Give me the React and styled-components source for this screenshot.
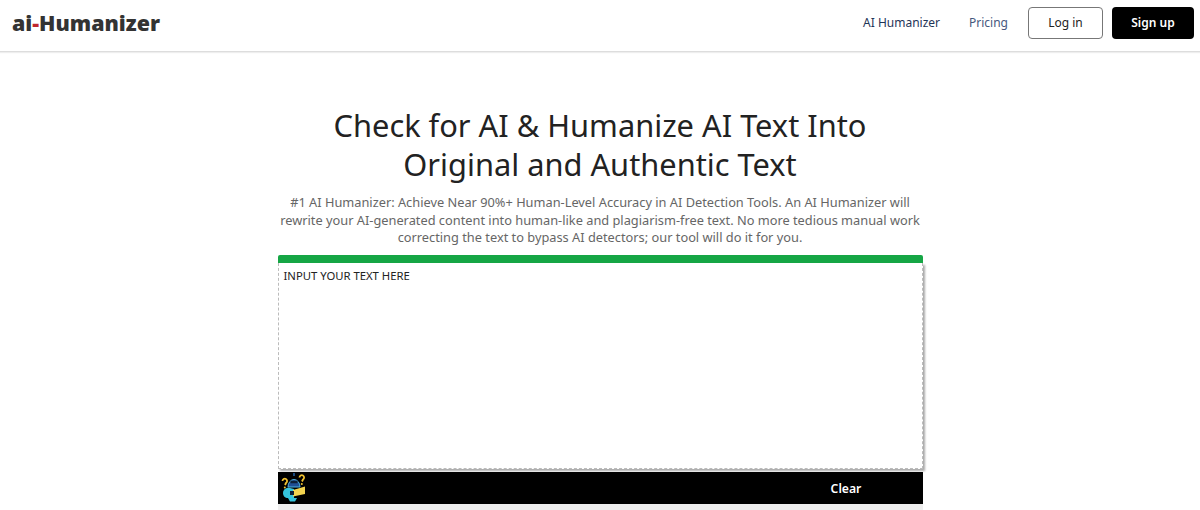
import styled, { createGlobalStyle } from "styled-components";

const GlobalStyle = createGlobalStyle`
    html, body {
        margin: 0;
        padding: 0;
        background: #FFFFFF;
        overflow: hidden;
    }
    * {
        box-sizing: border-box;
    }
    body {
        font-family: "Noto Sans", "Open Sans", sans-serif;
    }
`;

function BotIcon() {
    return (
        <svg width="28" height="30" viewBox="0 0 28 30">
            <path d="M16 0v3" stroke="#2B7BD0" strokeWidth="1.2" />
            <path d="M10 14a6 7.500 0 0 1 12 0z" fill="#1F4F96" stroke="#4FB4E0" strokeWidth="1" />
            <path d="M12.500 9h7" stroke="#0E2038" strokeWidth="2.500" />
            <path d="M5 20c0-3 3-6 7-5l4 1v9H10c-3 0-5-2-5-5z" fill="#35C4DD" />
            <path d="M15 17l12-3.500V21l-12 2.500z" fill="#F2D34F" />
            <rect x="12" y="18" width="4" height="4" fill="#0E2038" />
            <path d="M10 25h9l-2 3.500h-5z" fill="#35C4DD" />
            <path d="M4.500 8a2.300 2.300 0 1 1 3.500 2L7 12" stroke="#F2C230" strokeWidth="1.800" fill="none" />
            <circle cx="6.800" cy="14.500" r="1" fill="#F2C230" />
            <path d="M21.500 4.500a2.300 2.300 0 1 1 3.500 2L24 8.500" stroke="#F2C230" strokeWidth="1.800" fill="none" />
            <circle cx="23.800" cy="11" r="1" fill="#F2C230" />
        </svg>
    );
}

export default function App() {
    return (
        <>
            <GlobalStyle />
            <Header>
                <Logo>ai<LogoDash>-</LogoDash>Humanizer</Logo>
                <Nav>
                    <NavLink href="#">AI Humanizer</NavLink>
                    <NavLink href="#" $muted>Pricing</NavLink>
                    <LoginButton>Log in</LoginButton>
                    <SignupButton>Sign up</SignupButton>
                </Nav>
            </Header>
            <Main>
                <Title>Check for AI &amp; Humanize AI Text Into<br />Original and Authentic Text</Title>
                <Intro>
                    #1 AI Humanizer: Achieve Near 90%+ Human-Level Accuracy in AI Detection Tools. An AI Humanizer will<br />
                    rewrite your AI-generated content into human-like and plagiarism-free text. No more tedious manual work<br />
                    correcting the text to bypass AI detectors; our tool will do it for you.
                </Intro>
                <Editor>
                    <GreenBar />
                    <InputBox defaultValue="INPUT YOUR TEXT HERE" spellCheck={false} />
                    <ActionBar>
                        <BotIcon />
                        <ClearButton>Clear</ClearButton>
                    </ActionBar>
                    <GreyStrip />
                </Editor>
            </Main>
        </>
    );
}

const Header = styled.header`
    height: 52px;
    display: flex;
    align-items: center;
    justify-content: space-between;
    padding: 0 6px 6px 12px;
    border-bottom: 1px solid #DDDDDD;
    box-shadow: 0 1px 1px #EEEEEE;
`;
const Logo = styled.div`
    font-size: 21.4px;
    font-weight: 900;
    color: #333333;
`;
const LogoDash = styled.span`
    color: #C0272D;
`;
const Nav = styled.nav`
    display: flex;
    align-items: center;
`;
const NavLink = styled.a`
    font-size: 12px;
    color: ${(props) => (props.$muted ? "#46587E" : "#1F3558")};
    text-decoration: none;
    margin-right: 20px;
    margin-left: 9px;
`;
const LoginButton = styled.button`
    width: 75px;
    height: 32px;
    border: 1px solid #777777;
    border-radius: 4px;
    background: #FFFFFF;
    color: #222222;
    font-family: inherit;
    font-size: 12px;
    margin-right: 9px;
    padding: 0;
`;
const SignupButton = styled.button`
    width: 82px;
    height: 32px;
    border: none;
    border-radius: 4px;
    background: #000000;
    color: #FFFFFF;
    font-family: inherit;
    font-size: 12px;
    font-weight: 600;
    padding: 0;
`;
const Main = styled.main`
    display: flex;
    flex-direction: column;
    align-items: center;
    padding-top: 54px;
`;
const Title = styled.h1`
    margin: 0;
    font-size: 30.8px;
    line-height: 39px;
    font-weight: 400;
    color: #222222;
    text-align: center;
`;
const Intro = styled.p`
    margin: 10px 0 0;
    font-size: 12.8px;
    line-height: 17.5px;
    color: #666666;
    text-align: center;
    white-space: nowrap;
`;
const Editor = styled.section`
    width: 645px;
    margin-top: 8px;
    display: flex;
    flex-direction: column;
`;
const GreenBar = styled.div`
    height: 8px;
    background: #15A645;
    border-radius: 2px 2px 0 0;
`;
const InputBox = styled.textarea`
    height: 206px;
    border: 1px dashed #BBBBBB;
    border-top: none;
    box-shadow: 2px 2px 2px #AAAAAA;
    padding: 5px 4px 6px 5px;
    resize: none;
    outline: none;
    font-family: inherit;
    font-size: 11.3px;
    line-height: 16px;
    color: #222222;
`;
const ActionBar = styled.div`
    height: 32px;
    margin-top: 3px;
    background: #000000;
    display: flex;
    align-items: center;
    justify-content: space-between;
`;
const ClearButton = styled.button`
    width: 153px;
    border: none;
    background: none;
    color: #FFFFFF;
    font-family: inherit;
    font-size: 12.2px;
    font-weight: 600;
    padding: 2px 0 0;
`;
const GreyStrip = styled.div`
    height: 6px;
    background: #EEEEEE;
`;
